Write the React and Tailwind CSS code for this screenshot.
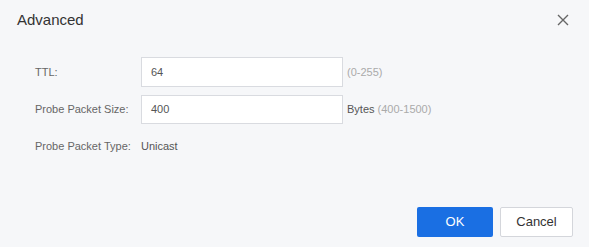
import React from "react";

export default function App() {
  return (
    <div
      className="w-[589px] h-[247px] bg-[#f6f7f9] flex flex-col text-[#666]"
      style={{ fontFamily: '"Liberation Sans", Arial, sans-serif' }}
    >
      <div className="h-[40px] flex items-center justify-between pl-[17px] pr-[20px]">
        <span className="text-[15px] text-[#333] mt-[1px]">Advanced</span>
        <svg width="12" height="12" viewBox="0 0 12 12" className="text-[#666]">
          <path d="M1 1L11 11M11 1L1 11" stroke="currentColor" strokeWidth="1.4" />
        </svg>
      </div>
      <div className="flex flex-col pl-[35px] pt-[17px] text-[11px]">
        <div className="flex items-center h-[30px]">
          <span className="w-[106px]">TTL:</span>
          <div className="w-[202px] h-[30px] border border-[#d9dbe0] bg-white flex items-center px-[9px] text-[#555]">64</div>
          <span className="ml-[4px] text-[#aaa]">(0-255)</span>
        </div>
        <div className="flex items-center h-[29px] mt-[8px]">
          <span className="w-[106px]">Probe Packet Size:</span>
          <div className="w-[202px] h-[29px] border border-[#d9dbe0] bg-white flex items-center px-[9px] text-[#555]">400</div>
          <span className="ml-[4px] text-[#555]">Bytes <span className="text-[#aaa]">(400-1500)</span></span>
        </div>
        <div className="flex items-center h-[20px] mt-[12px]">
          <span className="w-[106px]">Probe Packet Type:</span>
          <span className="text-[#555]">Unicast</span>
        </div>
      </div>
      <div className="flex-1" />
      <div className="flex justify-end gap-[7px] pr-[16px] pb-[10px]">
        <button className="w-[76px] h-[30px] bg-[#1a6fe3] text-white text-[13px] rounded-[2px]">OK</button>
        <button className="w-[73px] h-[30px] bg-white border border-[#d4d6db] text-[#333] text-[13px] rounded-[2px]">Cancel</button>
      </div>
    </div>
  );
}
